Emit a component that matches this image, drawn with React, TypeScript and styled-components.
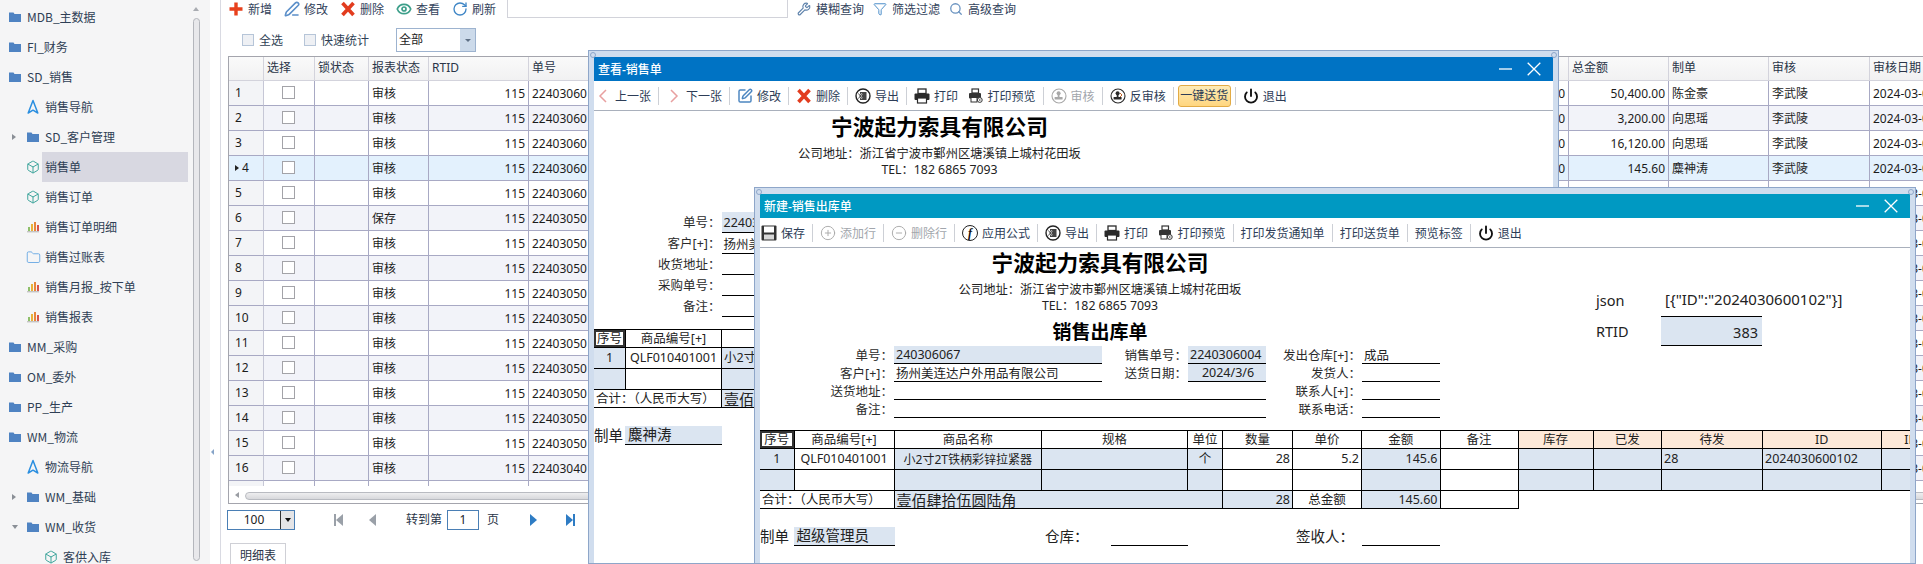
import React from "react";
import styled, { createGlobalStyle } from "styled-components";
import { Box, CircleMinus, CirclePlus, Eye, Filter, Folder, PenLine, Power, RotateCw, Search, SquarePen, Wrench } from "lucide-react";

const FONT = `"Noto Sans", "Noto Sans CJK SC", sans-serif`;

const GlobalStyle = createGlobalStyle`
  html, body { margin: 0; padding: 0; background: #fff; overflow: hidden; }
  body { font-family: ${FONT}; font-size: 12px; color: #222; }
  * { box-sizing: border-box; }
`;

/* ---------- drawn icons ---------- */

const FolderIcon = () => (
  <svg width="12" height="12" viewBox="0 0 12 12"><path d="M0 1.5h4.5l1 1.5H12v8H0z" fill="#4f83c2" /></svg>
);
const NavIcon = () => (
  <svg width="12" height="16" viewBox="0 0 12 16"><path d="M6 1.5 10.8 14 6 11.2 1.2 14z" fill="none" stroke="#2b8fe0" strokeWidth="1.5" strokeLinejoin="round" /></svg>
);
const BarsIcon = () => (
  <svg width="12" height="12" viewBox="0 0 12 12">
    <rect x="1" y="6" width="2" height="4" fill="#8fbf6a" />
    <rect x="4" y="3" width="2" height="7" fill="#e8b23a" />
    <rect x="7" y="1" width="2" height="9" fill="#e8853a" />
    <rect x="10" y="4" width="2" height="6" fill="#d9534a" />
    <rect x="0" y="10" width="12" height="1.4" fill="#c4c4c4" />
  </svg>
);
const PlusIcon = () => (
  <svg width="16" height="16" viewBox="0 0 16 16"><path d="M8 1.5v13M1.5 8h13" stroke="#e8401c" strokeWidth="3.4" /></svg>
);
const CrossIcon = () => (
  <svg width="16" height="16" viewBox="0 0 16 16"><path d="M2.5 2 13.5 14M13.5 2 2.5 14" stroke="#e23c1e" strokeWidth="3.6" /></svg>
);
const ChevronIcon = ({ flip }: { flip?: boolean }) => (
  <svg width="16" height="16" viewBox="0 0 16 16">
    <path d={flip ? "M5 2l6 6-6 6" : "M11 2 5 8l6 6"} fill="none" stroke="#e8a0a0" strokeWidth="1.5" />
  </svg>
);
const ExportIcon = () => (
  <svg width="16" height="16" viewBox="0 0 16 16">
    <circle cx="8" cy="8" r="7" fill="#fff" stroke="#222" strokeWidth="1.4" />
    <rect x="5" y="4" width="6.5" height="8" fill="#444" />
    <path d="M3.5 5.5l3.5 5M7 5.5l-3.5 5" stroke="#fff" strokeWidth="1.6" />
    <path d="M3.5 5.5l3.5 5M7 5.5l-3.5 5" stroke="#222" strokeWidth=".8" />
  </svg>
);
const PrinterIcon = () => (
  <svg width="16" height="16" viewBox="0 0 16 16">
    <rect x="4" y="1" width="8" height="4.5" fill="#fff" stroke="#2a2a2a" strokeWidth="1.3" />
    <rect x="0.5" y="5.5" width="15" height="6.5" rx="1" fill="#2a2a2a" />
    <rect x="3.5" y="10" width="9" height="5" fill="#fff" stroke="#2a2a2a" strokeWidth="1.2" />
  </svg>
);
const PreviewIcon = () => (
  <svg width="16" height="16" viewBox="0 0 16 16">
    <rect x="4" y="1" width="6.5" height="4" fill="#fff" stroke="#333" strokeWidth="1.2" />
    <rect x="1" y="5" width="12" height="5.5" rx="1" fill="#333" />
    <rect x="3" y="9.5" width="6" height="4.5" fill="#fff" stroke="#333" />
    <circle cx="11.8" cy="12" r="2.4" fill="#fff" stroke="#333" />
    <circle cx="11.8" cy="12" r=".8" fill="#333" />
  </svg>
);
const SaveIcon = () => (
  <svg width="16" height="16" viewBox="0 0 16 16">
    <rect x=".5" y=".5" width="15" height="15" rx="1" fill="#333" />
    <rect x="3" y="1.5" width="10" height="6" fill="#fff" />
    <rect x="3" y="9.5" width="10" height="5" fill="#d8d8d8" />
  </svg>
);
const StampIcon = ({ dim }: { dim?: boolean }) => {
  const c = dim ? "#a8a8a8" : "#2a2a2a";
  return (
    <svg width="16" height="16" viewBox="0 0 16 16">
      <circle cx="8" cy="8" r="7" fill="#fff" stroke={c} strokeWidth="1.1" />
      <circle cx="7.6" cy="5.2" r="2" fill={c} />
      <rect x="6.7" y="6" width="1.8" height="3" fill={c} />
      <rect x="3.6" y="9" width="8" height="2.6" rx=".6" fill={c} />
      {!dim && <path d="M10 5l2 2-2 2" fill="none" stroke="#c6692b" strokeWidth="1" />}
    </svg>
  );
};
const PageIcon = ({ dir, bar, on }: { dir: "l" | "r"; bar?: boolean; on?: boolean }) => {
  const c = on ? "#2e7cc4" : "#9aa0a8";
  return (
    <svg width="10" height="14" viewBox="0 0 10 14">
      <path d={dir === "l" ? "M9 1v12L2 7z" : "M1 1v12l7-6z"} fill={c} />
      {bar && <rect x={dir === "l" ? 0 : 8} y="1" width="2" height="12" fill={c} />}
    </svg>
  );
};

/* ---------- sidebar ---------- */

const Sidebar = styled.aside`
  flex: 0 0 210px;
  height: 564px;
  background: #f5f5f6;
  display: flex;
  overflow: hidden;
`;
const Tree = styled.div`
  flex: 0 0 193px;
  padding-top: 2px;
  font-family: "Noto Sans CJK SC", sans-serif;
`;
const TreeRow = styled.div`
  width: 187.5px;
  height: 30px;
  padding-left: 9px;
  display: flex;
  align-items: center;
`;
const Twist = styled.span<{ $level: number }>`
  flex: 0 0 ${(p) => p.$level * 18}px;
  display: flex;
  align-items: center;
  padding-left: ${(p) => (p.$level ? 3 : 0)}px;
`;
const TwistArrow = styled.i<{ $open?: boolean }>`
  width: 0;
  height: 0;
  ${(p) =>
    p.$open
      ? "border-left: 3.5px solid transparent; border-right: 3.5px solid transparent; border-top: 4px solid #8a8f96;"
      : "border-top: 3.5px solid transparent; border-bottom: 3.5px solid transparent; border-left: 4px solid #8a8f96;"}
`;
const TreeIcon = styled.span`
  flex: 0 0 12px;
  min-width: 0;
  display: flex;
  justify-content: center;
  align-items: center;
  svg { flex: none; }
`;
const TreeLabel = styled.span<{ $active?: boolean }>`
  flex: 1;
  margin-left: 3px;
  padding-left: 3px;
  height: 30px;
  line-height: 29px;
  white-space: nowrap;
  color: #2f3f55;
  background: ${(p) => (p.$active ? "#d8d8e1" : "transparent")};
`;
const SideScroll = styled.div`
  flex: 0 0 7px;
  position: relative;
  padding-top: 18px;
  &::before {
    content: "";
    position: absolute;
    top: 7px;
    left: 0;
    border-left: 3.5px solid transparent;
    border-right: 3.5px solid transparent;
    border-bottom: 4px solid #a9acb2;
  }
`;
const SideThumb = styled.div`
  height: 543px;
  border: 1px solid #b4b6bc;
  border-radius: 4px;
  background: #e8e8eb;
`;
const Splitter = styled.div`
  flex: 0 0 11px;
  height: 564px;
  border-right: 1px solid #d9dae2;
  position: relative;
  &::after {
    content: "";
    position: absolute;
    left: 1px;
    top: 449px;
    border-top: 3.5px solid transparent;
    border-bottom: 3.5px solid transparent;
    border-right: 3.5px solid #86a4c8;
  }
`;

/* ---------- main list ---------- */

const Main = styled.main`
  flex: 1;
  min-width: 0;
  height: 564px;
  overflow: hidden;
`;
const TopBar = styled.div`
  height: 18px;
  display: flex;
  align-items: center;
  padding-left: 7px;
`;
const TopTool = styled.span`
  display: inline-flex;
  align-items: center;
  gap: 4px;
  margin-right: 12px;
  color: #33435c;
  white-space: nowrap;
`;
const SearchBox = styled.div`
  width: 281px;
  height: 19px;
  margin: -1px 9px 0 -1px;
  border: 1px solid #d2d3da;
  border-top: 0;
`;
const QueryTool = styled(TopTool)`
  gap: 5px;
  margin-right: 9px;
`;
const FilterBar = styled.div`
  height: 38px;
  padding: 10px 0 0 21px;
  display: flex;
  align-items: flex-start;
`;
const FilterCheck = styled.label`
  display: inline-flex;
  align-items: center;
  gap: 5px;
  height: 24px;
  margin-right: 21px;
  color: #2f3f55;
`;
const FlatBox = styled.i`
  width: 12px;
  height: 12px;
  border: 1.5px solid #b6c5d8;
  background: #eef0f4;
`;
const Combo = styled.div`
  width: 80px;
  height: 24px;
  margin-left: 6px;
  display: flex;
  border: 1px solid #9db3cf;
`;
const ComboText = styled.span`
  flex: 1;
  padding-left: 2px;
  line-height: 21px;
`;
const ComboBtn = styled.span`
  flex: 0 0 15px;
  display: flex;
  align-items: center;
  justify-content: center;
  background: #ccdaea;
  &::after {
    content: "";
    border-left: 3px solid transparent;
    border-right: 3px solid transparent;
    border-top: 3px solid #5f7085;
  }
`;

const COLS = "35px 51px 54px 60px 100px 112px 928px 100px 100px 101px 160px";

const DataGrid = styled.div`
  width: 1801px;
  margin-left: 7px;
  height: 448px;
  border: 1px solid #a4a5ad;
  border-right: 0;
`;
const GridBody = styled.div`
  height: 429px;
  overflow: hidden;
`;
const HeadRow = styled.div`
  display: grid;
  grid-template-columns: ${COLS};
  height: 24px;
`;
const HeadCell = styled.div`
  padding-left: 3px;
  line-height: 22px;
  white-space: nowrap;
  color: #2a3548;
  background: linear-gradient(#fafafa, #f1f1f2);
  border-right: 1px solid #d3d3dc;
  border-bottom: 1px solid #d3d3dc;
`;
const DataRow = styled.div<{ $tone: string }>`
  display: grid;
  grid-template-columns: ${COLS};
  height: 25px;
  background: ${(p) => p.$tone};
`;
const DataCell = styled.div<{ $right?: boolean }>`
  padding: 0 3px;
  line-height: 26px;
  white-space: nowrap;
  overflow: hidden;
  color: #1c1c1c;
  text-align: ${(p) => (p.$right ? "right" : "left")};
  border-right: 1px solid #a8a9c4;
  border-bottom: 1px solid #a8a9c4;
`;
const IndexCell = styled(DataCell)<{ $current?: boolean }>`
  padding-left: 6px;
  background: ${(p) => (p.$current ? "transparent" : "#f3f4f7")};
  border-right-color: #c6c7d6;
  display: flex;
  align-items: center;
  gap: 3px;
  line-height: 1;
`;
const CurrentMark = styled.i`
  border-top: 3.5px solid transparent;
  border-bottom: 3.5px solid transparent;
  border-left: 4px solid #222;
`;
const CheckCell = styled(DataCell)`
  display: flex;
  align-items: center;
  justify-content: center;
`;
const RowCheck = styled.i`
  width: 13px;
  height: 13px;
  margin: -2px 0 0 -1px;
  border: 1.5px solid #a3a3a8;
  background: #fff;
`;
const HScroll = styled.div`
  height: 17px;
  background: #fff;
  display: flex;
  align-items: center;
  gap: 6px;
  padding-left: 6px;
  &::before {
    content: "";
    border-top: 3.5px solid transparent;
    border-bottom: 3.5px solid transparent;
    border-right: 4px solid #9a9da3;
  }
`;
const HThumb = styled.div`
  flex: 1;
  height: 8px;
  margin-top: 3px;
  border: 1px solid #b9bbc1;
  border-radius: 4px;
  background: linear-gradient(#eeeeef, #d8d9dc);
`;
const Pager = styled.div`
  height: 39px;
  padding: 6px 0 0 6px;
  display: flex;
  align-items: flex-start;
`;
const PageSize = styled.div`
  width: 68px;
  height: 20px;
  display: flex;
  border: 1px solid #4a7fb5;
`;
const PageSizeText = styled.span`
  flex: 1;
  text-align: center;
  line-height: 18px;
`;
const PageSizeBtn = styled.span`
  flex: 0 0 14px;
  display: flex;
  align-items: center;
  justify-content: center;
  background: #e4e4e6;
  border-left: 1px solid #333;
  &::after {
    content: "";
    border-left: 3.5px solid transparent;
    border-right: 3.5px solid transparent;
    border-top: 4px solid #111;
  }
`;
const PageBtn = styled.span<{ $gap: number }>`
  margin-left: ${(p) => p.$gap}px;
  height: 20px;
  display: flex;
  align-items: center;
`;
const PageText = styled.span<{ $gap: number }>`
  margin-left: ${(p) => p.$gap}px;
  line-height: 20px;
  white-space: nowrap;
  color: #2a3548;
`;
const PageInput = styled.span`
  width: 32px;
  height: 20px;
  margin-left: 5px;
  border: 1px solid #4a7fb5;
  text-align: center;
  line-height: 18px;
`;
const TabStrip = styled.div`
  padding-left: 9px;
`;
const Tab = styled.div`
  width: 56px;
  height: 24px;
  border: 1px solid #cfd0d6;
  text-align: center;
  line-height: 24px;
  color: #2a3548;
`;

/* ---------- floating windows ---------- */

const Win = styled.section<{ $left: number; $top: number; $width: number }>`
  position: absolute;
  left: ${(p) => p.$left}px;
  top: ${(p) => p.$top}px;
  width: ${(p) => p.$width}px;
  height: ${(p) => 564 - p.$top}px;
  padding: 6px 5px 0;
  background: #d0ddee;
  border: 1px solid #8ea6c9;
  overflow: hidden;
  &::before,
  &::after {
    content: "";
    position: absolute;
    top: 1px;
    width: 4px;
    height: 4px;
    border: 1px solid #8ea6c9;
    border-radius: 50%;
  }
  &::before { left: 1px; }
  &::after { right: 1px; }
`;
const WinPane = styled.div`
  background: #fff;
  height: 100%;
  overflow: hidden;
`;
const TitleBar = styled.header<{ $bg: string }>`
  height: 24px;
  padding: 0 12px 0 4px;
  display: flex;
  align-items: center;
  justify-content: space-between;
  background: ${(p) => p.$bg};
  color: #fff;
  font-weight: 500;
`;
const TitleBtns = styled.div`
  display: flex;
  align-items: center;
  gap: 15px;
`;
const ToolBar = styled.div`
  height: 30px;
  padding-left: 1px;
  display: flex;
  align-items: center;
  border-bottom: 1px solid #a9b0bc;
  white-space: nowrap;
`;
const Tool = styled.span<{ $dim?: boolean; $ml?: number }>`
  display: inline-flex;
  align-items: center;
  gap: 4px;
  margin-left: ${(p) => p.$ml || 0}px;
  color: ${(p) => (p.$dim ? "#a2a6ac" : "#2d3d57")};
`;
const ToolSep = styled.i`
  flex: 0 0 1px;
  height: 18px;
  margin: 0 7px;
  background: #cdd0d6;
`;
const HotTool = styled.span`
  height: 22px;
  margin: 0 -3px;
  padding: 0 1.5px;
  line-height: 20px;
  color: #2d3d57;
  background: linear-gradient(#fdebb8, #ffd67f);
  border: 1px solid #e2ab45;
  border-radius: 3px;
`;
const FormulaIcon = styled.span`
  width: 16px;
  height: 16px;
  border: 1px solid #222;
  border-radius: 50%;
  text-align: center;
  font: italic 700 12px/14px "Liberation Serif", serif;
  color: #111;
`;

const Letterhead = styled.div<{ $width: number; $pad: number }>`
  width: ${(p) => p.$width}px;
  padding-top: ${(p) => p.$pad}px;
  text-align: center;
  flex: none;
`;
const CompanyName = styled.div`
  font-size: 21.7px;
  font-weight: 700;
  line-height: 30px;
  color: #000;
  margin-bottom: 4px;
`;
const AddressLine = styled.div`
  font-size: 12.3px;
  line-height: 16px;
  color: #222;
`;
const DocTitle = styled.div`
  margin-top: 4px;
  font-size: 19px;
  font-weight: 700;
  line-height: 28px;
  color: #000;
`;
const TopBlock = styled.div<{ $h: number }>`
  height: ${(p) => p.$h}px;
  display: flex;
`;
const SidePanel = styled.div`
  margin: 36px 0 0 156px;
  width: 340px;
  display: grid;
  grid-template-columns: 65px 101px;
  grid-template-rows: 32px 30px;
  font-size: 14.5px;
  color: #222;
  align-items: center;
`;
const SideValue = styled.div<{ $boxed?: boolean }>`
  white-space: nowrap;
  height: 100%;
  line-height: 30px;
  padding-left: ${(p) => (p.$boxed ? 0 : 4)}px;
  padding-right: ${(p) => (p.$boxed ? 4 : 0)}px;
  text-align: ${(p) => (p.$boxed ? "right" : "left")};
  font-size: ${(p) => (p.$boxed ? 14.5 : 15)}px;
  ${(p) => p.$boxed && "background: #dbe5f1; border-top: 1px solid #000; border-bottom: 1px solid #000;"}
`;

const FormGrid = styled.div<{ $cols: string; $row: number }>`
  display: grid;
  grid-template-columns: ${(p) => p.$cols};
  grid-auto-rows: ${(p) => p.$row}px;
  font-size: 12.5px;
`;
const FormLabel = styled.div`
  text-align: right;
  padding-right: 1px;
  white-space: nowrap;
  color: #2b2b2b;
  line-height: 17px;
  align-self: center;
`;
const FormValue = styled.div<{ $fill?: boolean; $span?: number; $center?: boolean }>`
  grid-column: span ${(p) => p.$span || 1};
  padding-left: 2px;
  white-space: nowrap;
  overflow: hidden;
  display: flex;
  align-items: center;
  justify-content: ${(p) => (p.$center ? "center" : "flex-start")};
  background: ${(p) => (p.$fill ? "#dbe5f1" : "transparent")};
  border-bottom: 1px solid #000;
`;

const DocTable = styled.table`
  margin-top: 12px;
  border-collapse: collapse;
  table-layout: fixed;
  width: max-content;
  border-top: 1px solid #000;
`;
const DocRow = styled.tr<{ $h: number }>`
  height: ${(p) => p.$h}px;
`;
const DocCell = styled.td<{ $fill?: string; $align?: string; $size?: number; $mark?: boolean }>`
  padding: 1px 2px 0;
  overflow: hidden;
  white-space: nowrap;
  font-weight: 400;
  font-size: ${(p) => p.$size || 12.5}px;
  line-height: 1;
  color: #222;
  text-align: ${(p) => p.$align || "center"};
  background: ${(p) => p.$fill || "transparent"};
  border: 1px solid #000;
  &:first-child { border-left: 0; }
  ${(p) => p.$mark && "box-shadow: inset 0 0 0 2px #333;"}
`;
const SignRow = styled.div<{ $cols: string; $mt: number }>`
  display: grid;
  grid-template-columns: ${(p) => p.$cols};
  height: 18.5px;
  margin-top: ${(p) => p.$mt}px;
  font-size: 14.5px;
  color: #222;
  align-items: center;
`;
const SignText = styled.div`
  white-space: nowrap;
  line-height: 18px;
`;
const SignValue = styled.div<{ $fill?: boolean }>`
  height: 100%;
  padding-left: 3px;
  line-height: 17px;
  white-space: nowrap;
  background: ${(p) => (p.$fill ? "#dbe5f1" : "transparent")};
  border-bottom: 1px solid #000;
`;

/* ---------- data ---------- */

const Page = styled.div`
  position: relative;
  width: 1923px;
  height: 564px;
  display: flex;
  overflow: hidden;
`;

type NavItem = { text: string; level: number; icon: "folder" | "nav" | "box" | "bars" | "open"; twist?: "open" | "closed"; active?: boolean };

const navItems: NavItem[] = [
  { text: "MDB_主数据", level: 0, icon: "folder" },
  { text: "FI_财务", level: 0, icon: "folder" },
  { text: "SD_销售", level: 0, icon: "folder" },
  { text: "销售导航", level: 1, icon: "nav" },
  { text: "SD_客户管理", level: 1, icon: "folder", twist: "closed" },
  { text: "销售单", level: 1, icon: "box", active: true },
  { text: "销售订单", level: 1, icon: "box" },
  { text: "销售订单明细", level: 1, icon: "bars" },
  { text: "销售过账表", level: 1, icon: "open" },
  { text: "销售月报_按下单", level: 1, icon: "bars" },
  { text: "销售报表", level: 1, icon: "bars" },
  { text: "MM_采购", level: 0, icon: "folder" },
  { text: "OM_委外", level: 0, icon: "folder" },
  { text: "PP_生产", level: 0, icon: "folder" },
  { text: "WM_物流", level: 0, icon: "folder" },
  { text: "物流导航", level: 1, icon: "nav" },
  { text: "WM_基础", level: 1, icon: "folder", twist: "closed" },
  { text: "WM_收货", level: 1, icon: "folder", twist: "open" },
  { text: "客供入库", level: 2, icon: "box" },
];

const navIcon = (kind: NavItem["icon"]) => {
  if (kind === "folder") return <FolderIcon />;
  if (kind === "nav") return <NavIcon />;
  if (kind === "bars") return <BarsIcon />;
  if (kind === "open") return <Folder size={15} color="#62a5e2" strokeWidth={1.4} />;
  return <Box size={14} color="#2f9e95" strokeWidth={1.6} />;
};

const listRows = Array.from({ length: 17 }, (_, i) => {
  const n = i + 1;
  return {
    n,
    status: n === 6 ? "保存" : "审核",
    bill: n <= 5 ? "22403060" : n < 16 ? "22403050" : "22403040",
    total: ["50,400.00", "3,200.00", "16,120.00", "145.60"][i] || "",
    maker: ["陈金豪", "向思瑶", "向思瑶", "麋神涛"][i] || "",
    checker: n <= 4 ? "李武陵" : "",
  };
});

const rowTone = (n: number) => (n === 4 ? "#e3f1fd" : n % 2 === 0 ? "#f2f3f9" : "#fff");

const CloseGlyph = () => (
  <svg width="14" height="14" viewBox="0 0 14 14"><path d="M.7.7l12.6 12.6M13.3.7.7 13.3" stroke="#fff" strokeWidth="1.3" /></svg>
);
const MinGlyph = () => (
  <svg width="13" height="14" viewBox="0 0 13 14"><path d="M0 7h13" stroke="#fff" strokeWidth="1.3" /></svg>
);

const WindowTitle = ({ text, bg }: { text: string; bg: string }) => (
  <TitleBar $bg={bg}>
    <span>{text}</span>
    <TitleBtns><MinGlyph /><CloseGlyph /></TitleBtns>
  </TitleBar>
);

const FILL = "#dbe5f1";
const PEACH = "#fde9d9";

/* 查看-销售单 */
const ViewWindow = () => (
  <Win $left={588} $top={50} $width={971}>
    <WinPane>
      <WindowTitle text="查看-销售单" bg="#0073c4" />
      <ToolBar>
        <Tool><ChevronIcon />上一张</Tool><ToolSep />
        <Tool><ChevronIcon flip />下一张</Tool><ToolSep />
        <Tool><SquarePen size={16} color="#4c86c0" strokeWidth={2.2} />修改</Tool><ToolSep />
        <Tool><CrossIcon />删除</Tool><ToolSep />
        <Tool><ExportIcon />导出</Tool><ToolSep />
        <Tool><PrinterIcon />打印</Tool>
        <Tool $ml={9.5}><PreviewIcon />打印预览</Tool><ToolSep />
        <Tool $dim><StampIcon dim />审核</Tool><ToolSep />
        <Tool><StampIcon />反审核</Tool><ToolSep />
        <HotTool>一键送货</HotTool><ToolSep />
        <Tool><Power size={16} color="#111" strokeWidth={2.8} />退出</Tool>
      </ToolBar>
      <TopBlock $h={101}>
        <Letterhead $width={691} $pad={1}>
          <CompanyName>宁波起力索具有限公司</CompanyName>
          <AddressLine>公司地址：浙江省宁波市鄞州区塘溪镇上城村花田坂</AddressLine>
          <AddressLine>TEL：182 6865 7093</AddressLine>
        </Letterhead>
      </TopBlock>
      <FormGrid $cols="127.5px 300px" $row={21}>
        <FormLabel>单号：</FormLabel><FormValue $fill>2240306004</FormValue>
        <FormLabel>客户[+]：</FormLabel><FormValue>扬州美连达户外用品有限公司</FormValue>
        <FormLabel>收货地址：</FormLabel><FormValue />
        <FormLabel>采购单号：</FormLabel><FormValue />
        <FormLabel>备注：</FormLabel><FormValue />
      </FormGrid>
      <DocTable>
        <colgroup><col width="31.5" /><col width="96" /><col width="147" /><col width="146" /></colgroup>
        <tbody>
          <DocRow $h={18}>
            <DocCell as="th" $mark>序号</DocCell><DocCell as="th">商品编号[+]</DocCell><DocCell as="th">商品名称</DocCell><DocCell as="th">规格</DocCell>
          </DocRow>
          <DocRow $h={21}>
            <DocCell $fill={FILL}>1</DocCell><DocCell>QLF010401001</DocCell><DocCell $fill={FILL} $align="left">小2寸2T铁柄彩锌拉紧器</DocCell><DocCell $fill={FILL} />
          </DocRow>
          <DocRow $h={21}>
            <DocCell $fill={FILL} /><DocCell /><DocCell $fill={FILL} /><DocCell $fill={FILL} />
          </DocRow>
          <DocRow $h={18}>
            <DocCell colSpan={2} $align="left">合计：（人民币大写）</DocCell><DocCell colSpan={2} $fill={FILL} $align="left" $size={15}>壹佰肆拾伍圆陆角</DocCell>
          </DocRow>
        </tbody>
      </DocTable>
      <SignRow $cols="31px 96.5px" $mt={18}>
        <SignText>制单</SignText><SignValue $fill>麋神涛</SignValue>
      </SignRow>
    </WinPane>
  </Win>
);

/* 新建-销售出库单 */
const OUT_COLS = [34, 100, 147.5, 146, 35, 70, 69, 78.5, 78, 75, 68.5, 101, 118.5, 60];

const EditWindow = () => (
  <Win $left={754} $top={187} $width={1162}>
    <WinPane>
      <WindowTitle text="新建-销售出库单" bg="#0099c2" />
      <ToolBar>
        <Tool><SaveIcon />保存</Tool><ToolSep />
        <Tool $dim><CirclePlus size={16} color="#a8a8a8" strokeWidth={1.4} />添加行</Tool><ToolSep />
        <Tool $dim><CircleMinus size={16} color="#a8a8a8" strokeWidth={1.4} />删除行</Tool><ToolSep />
        <Tool><FormulaIcon>f</FormulaIcon>应用公式</Tool><ToolSep />
        <Tool><ExportIcon />导出</Tool><ToolSep />
        <Tool><PrinterIcon />打印</Tool>
        <Tool $ml={9.5}><PreviewIcon />打印预览</Tool><ToolSep />
        <Tool>打印发货通知单</Tool><ToolSep />
        <Tool>打印送货单</Tool><ToolSep />
        <Tool>预览标签</Tool><ToolSep />
        <Tool><Power size={16} color="#111" strokeWidth={2.8} />退出</Tool>
      </ToolBar>
      <TopBlock $h={98}>
        <Letterhead $width={680} $pad={0}>
          <CompanyName>宁波起力索具有限公司</CompanyName>
          <AddressLine>公司地址：浙江省宁波市鄞州区塘溪镇上城村花田坂</AddressLine>
          <AddressLine>TEL：182 6865 7093</AddressLine>
          <DocTitle>销售出库单</DocTitle>
        </Letterhead>
        <SidePanel>
          <span>json</span><SideValue>{'[{"ID":"2024030600102"}]'}</SideValue>
          <span>RTID</span><SideValue $boxed>383</SideValue>
        </SidePanel>
      </TopBlock>
      <FormGrid $cols="134px 208px 86px 78px 96px 78px" $row={18}>
        <FormLabel>单号：</FormLabel><FormValue $fill>240306067</FormValue>
        <FormLabel>销售单号：</FormLabel><FormValue $fill>2240306004</FormValue>
        <FormLabel>发出仓库[+]：</FormLabel><FormValue>成品</FormValue>
        <FormLabel>客户[+]：</FormLabel><FormValue>扬州美连达户外用品有限公司</FormValue>
        <FormLabel>送货日期：</FormLabel><FormValue $fill $center>2024/3/6</FormValue>
        <FormLabel>发货人：</FormLabel><FormValue />
        <FormLabel>送货地址：</FormLabel><FormValue $span={3} />
        <FormLabel>联系人[+]：</FormLabel><FormValue />
        <FormLabel>备注：</FormLabel><FormValue $span={3} />
        <FormLabel>联系电话：</FormLabel><FormValue />
      </FormGrid>
      <DocTable>
        <colgroup>{OUT_COLS.map((w, i) => <col key={i} width={w} />)}</colgroup>
        <tbody>
          <DocRow $h={18}>
            <DocCell as="th" $mark>序号</DocCell>
            {["商品编号[+]", "商品名称", "规格", "单位", "数量", "单价", "金额", "备注"].map((t) => <DocCell as="th" key={t}>{t}</DocCell>)}
            {["库存", "已发", "待发", "ID", "ID"].map((t, i) => <DocCell as="th" key={i} $fill={PEACH}>{t}</DocCell>)}
          </DocRow>
          <DocRow $h={21}>
            <DocCell $fill={FILL}>1</DocCell>
            <DocCell>QLF010401001</DocCell>
            <DocCell $fill={FILL} $size={12}>小2寸2T铁柄彩锌拉紧器</DocCell>
            <DocCell $fill={FILL} />
            <DocCell $fill={FILL}>个</DocCell>
            <DocCell $align="right">28</DocCell>
            <DocCell $align="right">5.2</DocCell>
            <DocCell $fill={FILL} $align="right">145.6</DocCell>
            <DocCell />
            <DocCell $fill={FILL} />
            <DocCell $fill={FILL} />
            <DocCell $fill={FILL} $align="left">28</DocCell>
            <DocCell $fill={FILL} $align="left">2024030600102</DocCell>
            <DocCell $fill={FILL} />
          </DocRow>
          <DocRow $h={21}>
            {OUT_COLS.map((_, i) => <DocCell key={i} $fill={[1, 5, 6, 8].includes(i) ? undefined : FILL} />)}
          </DocRow>
          <DocRow $h={18}>
            <DocCell colSpan={2} $align="left">合计：（人民币大写）</DocCell>
            <DocCell colSpan={3} $fill={FILL} $align="left" $size={15}>壹佰肆拾伍圆陆角</DocCell>
            <DocCell $fill={FILL} $align="right">28</DocCell>
            <DocCell>总金额</DocCell>
            <DocCell $fill={FILL} $align="right">145.60</DocCell>
            <DocCell />
          </DocRow>
        </tbody>
      </DocTable>
      <SignRow $cols="33.5px 101.5px 150px 66px 77px 108px 66px 78px" $mt={18}>
        <SignText>制单</SignText><SignValue $fill>超级管理员</SignValue><span />
        <SignText>仓库：</SignText><SignValue /><span />
        <SignText>签收人：</SignText><SignValue />
      </SignRow>
    </WinPane>
  </Win>
);

export default function App() {
  return (
    <Page>
      <GlobalStyle />
      <Sidebar>
        <Tree>
          {navItems.map((item) => (
            <TreeRow key={item.text}>
              <Twist $level={item.level}>{item.twist && <TwistArrow $open={item.twist === "open"} />}</Twist>
              <TreeIcon>{navIcon(item.icon)}</TreeIcon>
              <TreeLabel $active={item.active}>{item.text}</TreeLabel>
            </TreeRow>
          ))}
        </Tree>
        <SideScroll><SideThumb /></SideScroll>
      </Sidebar>
      <Splitter />
      <Main>
        <TopBar>
          <TopTool><PlusIcon />新增</TopTool>
          <TopTool><PenLine size={16} color="#5b8fc9" strokeWidth={2.4} />修改</TopTool>
          <TopTool><CrossIcon />删除</TopTool>
          <TopTool><Eye size={16} color="#3d9f8a" strokeWidth={2.6} />查看</TopTool>
          <TopTool><RotateCw size={16} color="#3f86c6" strokeWidth={2} />刷新</TopTool>
          <SearchBox />
          <QueryTool><Wrench size={14} color="#5f83ac" strokeWidth={2} />模糊查询</QueryTool>
          <QueryTool><Filter size={14} color="#3f86c6" strokeWidth={1.6} />筛选过滤</QueryTool>
          <QueryTool><Search size={14} color="#6a93c0" strokeWidth={2.2} />高级查询</QueryTool>
        </TopBar>
        <FilterBar>
          <FilterCheck><FlatBox />全选</FilterCheck>
          <FilterCheck><FlatBox />快速统计</FilterCheck>
          <Combo><ComboText>全部</ComboText><ComboBtn /></Combo>
        </FilterBar>
        <DataGrid>
          <GridBody>
            <HeadRow>
              {["", "选择", "锁状态", "报表状态", "RTID", "单号", "", "总金额", "制单", "审核", "审核日期"].map((t, i) => (
                <HeadCell key={i}>{t}</HeadCell>
              ))}
            </HeadRow>
            {listRows.map((r) => (
              <DataRow key={r.n} $tone={rowTone(r.n)}>
                <IndexCell $current={r.n === 4}>{r.n === 4 && <CurrentMark />}{r.n}</IndexCell>
                <CheckCell><RowCheck /></CheckCell>
                <DataCell />
                <DataCell>{r.status}</DataCell>
                <DataCell $right>115</DataCell>
                <DataCell>{r.bill}</DataCell>
                <DataCell $right>0</DataCell>
                <DataCell $right>{r.total}</DataCell>
                <DataCell>{r.maker}</DataCell>
                <DataCell>{r.checker}</DataCell>
                <DataCell>2024-03-06</DataCell>
              </DataRow>
            ))}
          </GridBody>
          <HScroll><HThumb /></HScroll>
        </DataGrid>
        <Pager>
          <PageSize><PageSizeText>100</PageSizeText><PageSizeBtn /></PageSize>
          <PageBtn $gap={39}><PageIcon dir="l" bar /></PageBtn>
          <PageBtn $gap={23}><PageIcon dir="l" /></PageBtn>
          <PageText $gap={29}>转到第</PageText>
          <PageInput>1</PageInput>
          <PageText $gap={8}>页</PageText>
          <PageBtn $gap={30}><PageIcon dir="r" on /></PageBtn>
          <PageBtn $gap={26}><PageIcon dir="r" bar on /></PageBtn>
        </Pager>
        <TabStrip><Tab>明细表</Tab></TabStrip>
      </Main>
      <ViewWindow />
      <EditWindow />
    </Page>
  );
}
